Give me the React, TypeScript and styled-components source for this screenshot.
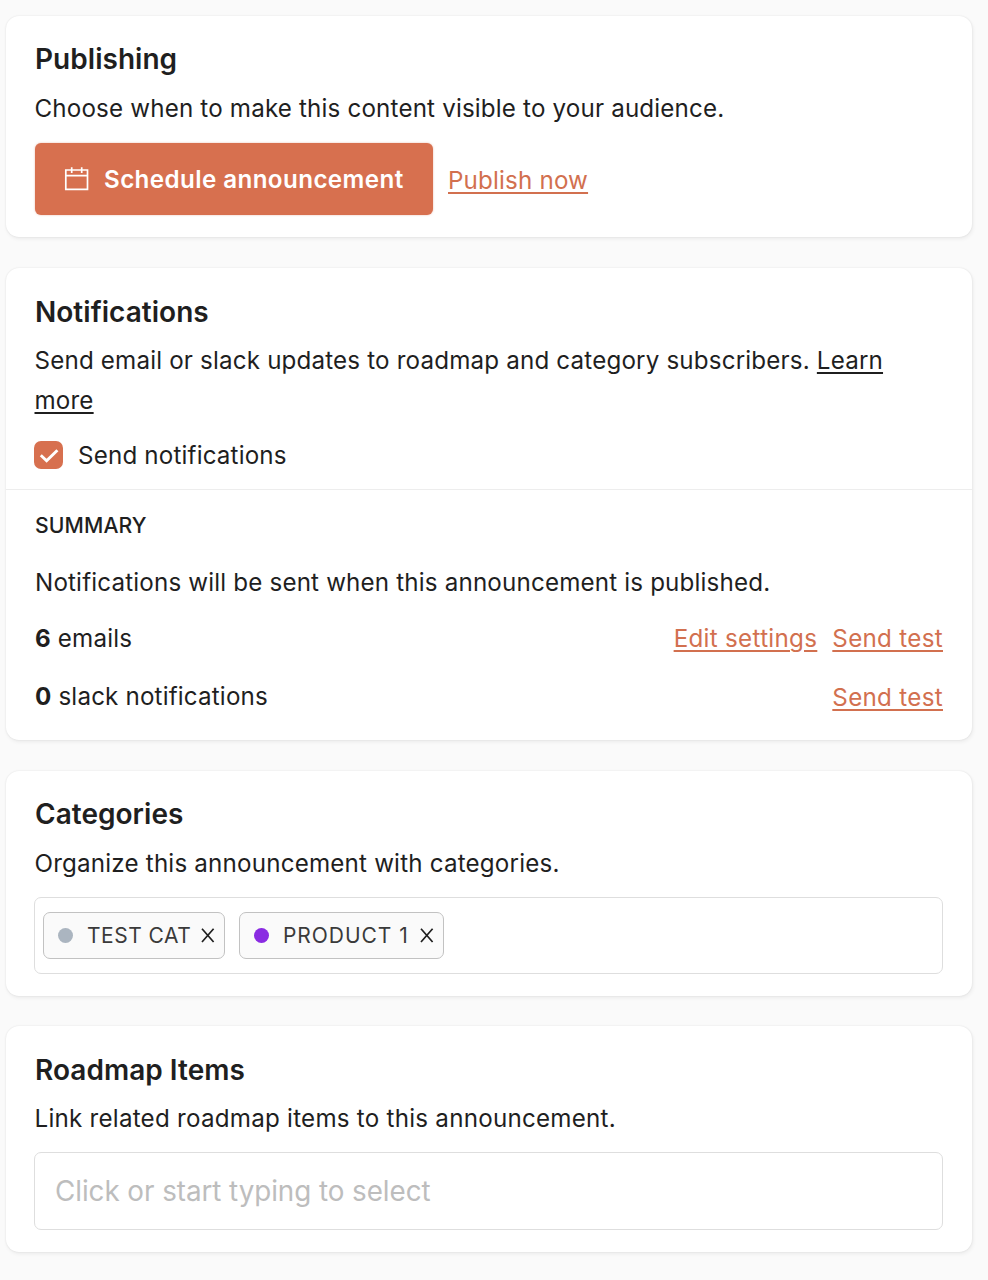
import React from "react";
import styled, { createGlobalStyle } from "styled-components";

const GlobalStyle = createGlobalStyle`
  * { box-sizing: border-box; }
  body {
    margin: 0;
    background: #fafafa;
    color: #1f1f1f;
    font-family: Inter, "Liberation Sans", sans-serif;
    font-size: 24.2px;
    line-height: 40px;
    letter-spacing: 0.16px;
  }
`;

const Page = styled.main`
  display: flex;
  flex-direction: column;
  min-height: 1280px;
  padding: 16px 16px 28px 6px;
`;

const Card = styled.section<{ $height: number; $gap?: number }>`
  height: ${(p) => p.$height}px;
  margin-bottom: ${(p) => p.$gap ?? 0}px;
  border-radius: 13px;
  background: #fff;
  box-shadow: 0 0 2px rgba(0, 0, 0, 0.1), 1px 2px 4px rgba(0, 0, 0, 0.06);
`;

const CardBody = styled.div`
  display: flex;
  flex-direction: column;
  padding: 25px 29px 0 28px;
`;

const Title = styled.h2<{ $low?: boolean }>`
  margin: 0 0 ${(p) => (p.$low ? 11 : 12)}px 1px;
  padding-top: ${(p) => (p.$low ? 1 : 0)}px;
  font-size: 28px;
  font-weight: 600;
  line-height: 36px;
  letter-spacing: 0.03px;
`;

const Description = styled.p<{ $tracking?: number }>`
  margin: 0 0 0 0.5px;
  letter-spacing: ${(p) => p.$tracking ?? 0.16}px;
`;

const Link = styled.a<{ $plain?: boolean }>`
  color: ${(p) => (p.$plain ? "inherit" : "#d2704f")};
  letter-spacing: ${(p) => (p.$plain ? "inherit" : "0.3px")};
  text-decoration: underline;
  text-decoration-thickness: 2px;
  text-underline-offset: 3px;
`;

const PublishRow = styled.div`
  display: flex;
  align-items: center;
  gap: 15px;
  margin: 14px 0 0 1px;

  ${Link} {
    padding-top: 4px;
    letter-spacing: 0.16px;
  }
`;

const ScheduleButton = styled.button`
  display: flex;
  align-items: center;
  gap: 15px;
  width: 398px;
  height: 72px;
  padding: 2px 0 0 29px;
  border: 0;
  border-radius: 6px;
  background: #d7704f;
  box-shadow: 0 0 2px rgba(215, 112, 79, 0.5);
  color: #fff;
  font: inherit;
  font-weight: 600;
  letter-spacing: 0.4px;
  white-space: nowrap;
`;

const CheckRow = styled.label`
  display: flex;
  align-items: center;
  gap: 15px;
  height: 28px;
  margin-top: 20px;
`;

const CheckBox = styled.span`
  display: grid;
  place-items: center;
  width: 29px;
  height: 28px;
  border-radius: 7px;
  background: #d7704f;
`;

const CheckLabel = styled.span`
  padding-top: 2px;
`;

const Summary = styled.div`
  display: flex;
  flex-direction: column;
  margin-top: 20px;
  padding: 15px 29px 0;
  border-top: 1px solid #ededed;
`;

const SummaryTitle = styled.h3`
  margin: 0 0 18px;
  font-size: 21.2px;
  font-weight: 500;
  letter-spacing: 0.1px;
`;

const SummaryRow = styled.div<{ $gap: number; $linkDrop?: number }>`
  display: flex;
  justify-content: space-between;
  height: 40px;
  margin-top: ${(p) => p.$gap}px;

  > ${Link} {
    padding-top: ${(p) => p.$linkDrop ?? 0}px;
  }
`;

const Actions = styled.span`
  display: flex;
  gap: 15px;
`;

const Field = styled.div<{ $height: number }>`
  display: flex;
  align-items: center;
  gap: 14px;
  height: ${(p) => p.$height}px;
  margin-top: 13px;
  padding: 0 8px;
  border: 1px solid #dedede;
  border-radius: 7px;
`;

const Placeholder = styled.span`
  padding-left: 12px;
  color: #bdbdbd;
  font-size: 27.8px;
  letter-spacing: -0.06px;
`;

const Chip = styled.span<{ $width: number; $tracking: number }>`
  display: flex;
  align-items: center;
  width: ${(p) => p.$width}px;
  height: 47px;
  padding: 0 9px 0 14px;
  border: 1px solid #c2c2c2;
  border-radius: 7px;
  background: #fafafa;
  color: #3a3a3a;
  font-size: 21px;
  letter-spacing: ${(p) => p.$tracking}px;
  white-space: nowrap;
`;

const Dot = styled.i<{ $color: string }>`
  width: 15px;
  height: 15px;
  margin-right: 14px;
  border-radius: 50%;
  background: ${(p) => p.$color};
`;

const RemoveIcon = styled.svg`
  margin-left: auto;
`;

interface CategoryProps {
  color: string;
  name: string;
  width: number;
  tracking: number;
}

function Category({ color, name, width, tracking }: CategoryProps) {
  return (
    <Chip $width={width} $tracking={tracking}>
      <Dot $color={color} />
      {name}
      <RemoveIcon width="14" height="15" viewBox="0 0 14 15" fill="none" stroke="#1f1f1f" strokeWidth="1.7">
        <path d="M1 .8 12.6 14M12.6 .8 1 14" />
      </RemoveIcon>
    </Chip>
  );
}

export default function App() {
  return (
    <>
      <GlobalStyle />
      <Page>
        <Card $height={221} $gap={31}>
          <CardBody>
            <Title>Publishing</Title>
            <Description>Choose when to make this content visible to your audience.</Description>
            <PublishRow>
              <ScheduleButton>
                <svg width="25" height="26" viewBox="0 0 25 26" fill="none" stroke="#fff" strokeWidth="1.7">
                  <path d="M1.8 3H23.5V22.4H1.8ZM1.8 8.6H23.5M7.7 .3V6M17.7 .3V6" />
                </svg>
                Schedule announcement
              </ScheduleButton>
              <Link>Publish now</Link>
            </PublishRow>
          </CardBody>
        </Card>

        <Card $height={472} $gap={31}>
          <CardBody>
            <Title $low>Notifications</Title>
            <Description>
              Send email or slack updates to roadmap and category subscribers. <Link $plain>Learn more</Link>
            </Description>
            <CheckRow>
              <CheckBox>
                <svg width="20" height="16" viewBox="0 0 20 16" fill="none" stroke="#fff" strokeWidth="2.9">
                  <path d="M1.8 8.3 7.6 13.8 18.4 3.2" />
                </svg>
              </CheckBox>
              <CheckLabel>Send notifications</CheckLabel>
            </CheckRow>
          </CardBody>
          <Summary>
            <SummaryTitle>SUMMARY</SummaryTitle>
            <span>Notifications will be sent when this announcement is published.</span>
            <SummaryRow $gap={16}>
              <span><b>6</b> emails</span>
              <Actions>
                <Link>Edit settings</Link>
                <Link>Send test</Link>
              </Actions>
            </SummaryRow>
            <SummaryRow $gap={18} $linkDrop={1}>
              <span><b>0</b> slack notifications</span>
              <Link>Send test</Link>
            </SummaryRow>
          </Summary>
        </Card>

        <Card $height={225} $gap={30}>
          <CardBody>
            <Title>Categories</Title>
            <Description $tracking={0.18}>Organize this announcement with categories.</Description>
            <Field $height={77}>
              <Category color="#abb5c0" name="TEST CAT" width={182} tracking={0.5} />
              <Category color="#8a2be2" name="PRODUCT 1" width={205} tracking={0.95} />
            </Field>
          </CardBody>
        </Card>

        <Card $height={226}>
          <CardBody>
            <Title $low>Roadmap Items</Title>
            <Description $tracking={0.23}>Link related roadmap items to this announcement.</Description>
            <Field $height={78}>
              <Placeholder>Click or start typing to select</Placeholder>
            </Field>
          </CardBody>
        </Card>
      </Page>
    </>
  );
}
